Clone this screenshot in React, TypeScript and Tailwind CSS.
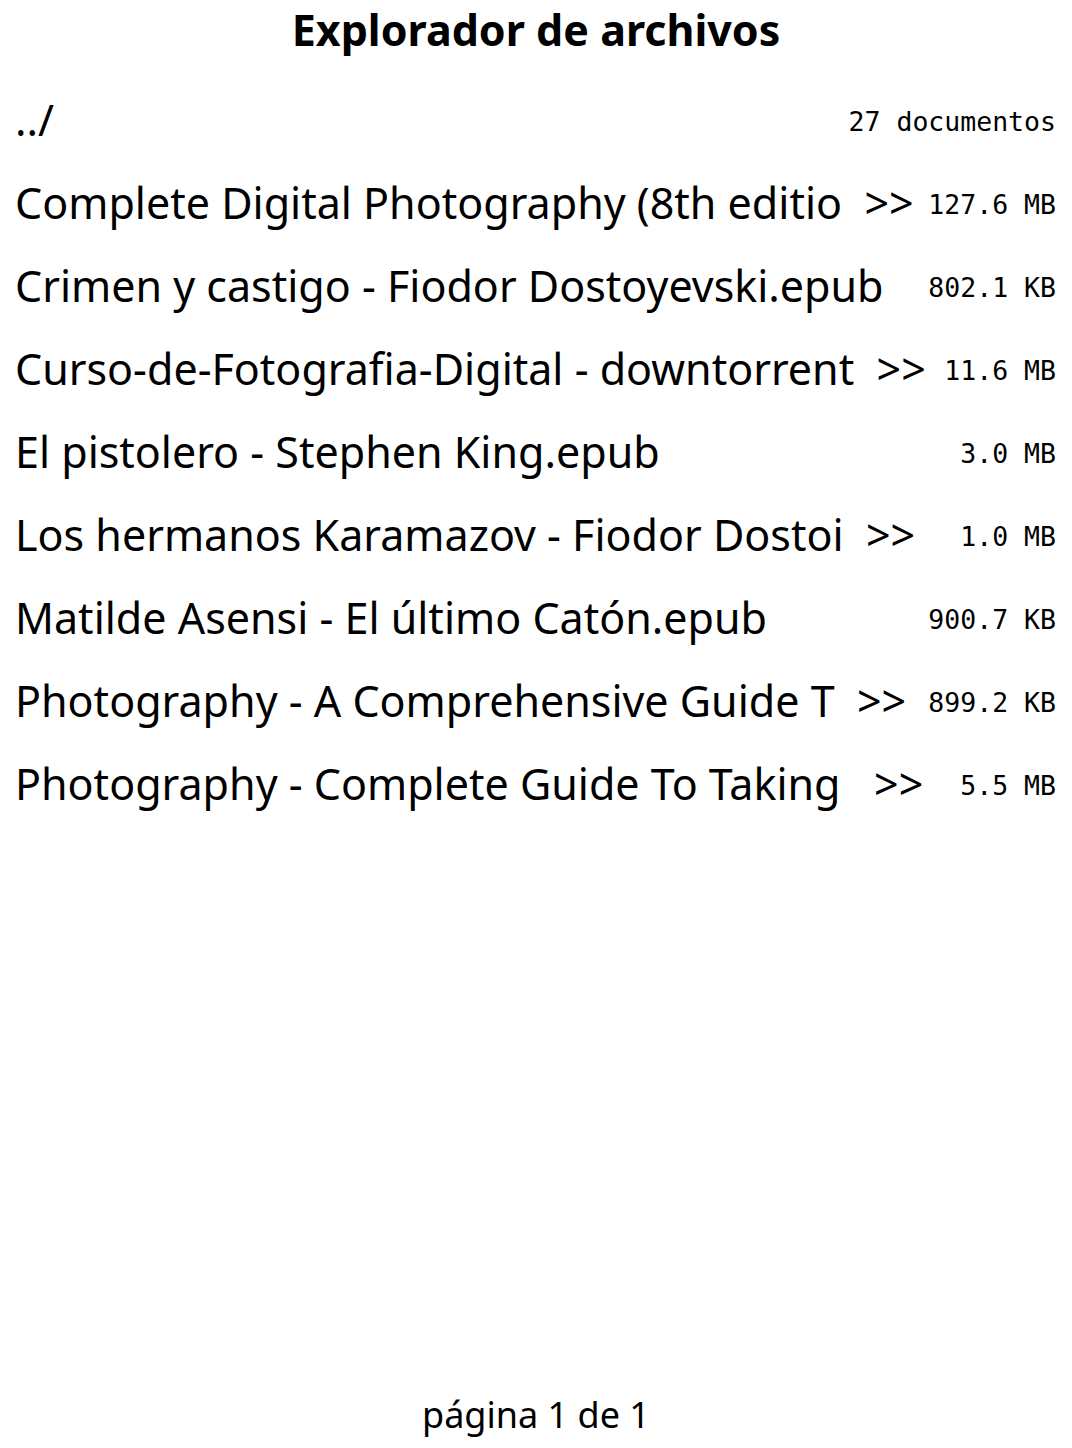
import React from "react";

const rows: { name: string; more?: boolean; size: string }[] = [
  { name: "Complete Digital Photography (8th editio", more: true, size: "127.6 MB" },
  { name: "Crimen y castigo - Fiodor Dostoyevski.epub", size: "802.1 KB" },
  { name: "Curso-de-Fotografia-Digital - downtorrent", more: true, size: "11.6 MB" },
  { name: "El pistolero - Stephen King.epub", size: "3.0 MB" },
  { name: "Los hermanos Karamazov - Fiodor Dostoi", more: true, size: "1.0 MB" },
  { name: "Matilde Asensi - El último Catón.epub", size: "900.7 KB" },
  { name: "Photography - A Comprehensive Guide T", more: true, size: "899.2 KB" },
  { name: "Photography - Complete Guide To Taking ", more: true, size: "5.5 MB" },
];

const sans = { fontFamily: '"Noto Sans", sans-serif' };
const mono = { fontFamily: '"DejaVu Sans Mono", monospace' };

export default function App() {
  return (
    <div className="flex h-[1448px] w-[1072px] flex-col bg-white text-black" style={sans}>
      <div className="flex h-[58px] items-center justify-center text-[43px] font-bold leading-none">
        Explorador de archivos
      </div>
      <div className="flex flex-col pl-[15px] pr-4 pt-[20px]">
        <div className="flex h-[83px] items-center justify-between">
          <span className="text-[43px] leading-none">../</span>
          <span className="mt-[6px] text-[26.5px] leading-none" style={mono}>
            27 documentos
          </span>
        </div>
        {rows.map((r) => (
          <div key={r.name} className="flex h-[83px] items-center justify-between">
            <span className="whitespace-pre text-[43px] leading-none">
              {r.name}
              {r.more ? "  >>" : ""}
            </span>
            <span className="mt-[6px] whitespace-pre text-[26.5px] leading-none" style={mono}>
              {r.size}
            </span>
          </div>
        ))}
      </div>
      <div className="mt-auto flex h-[66px] items-center justify-center text-[36px] leading-none">
        página 1 de 1
      </div>
    </div>
  );
}
